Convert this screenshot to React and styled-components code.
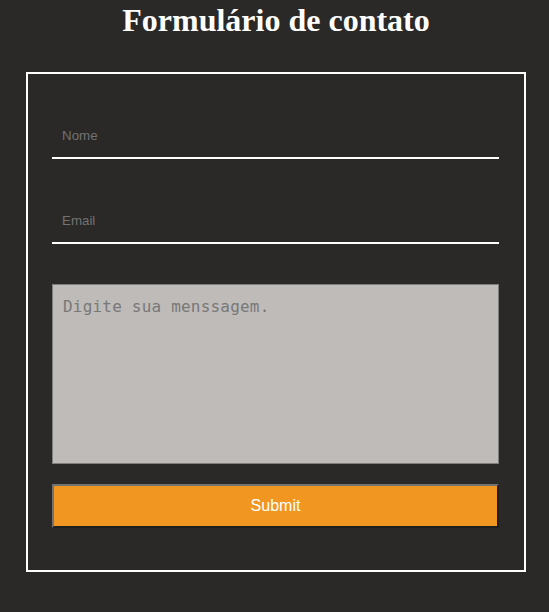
import React from 'react';
import styled, { createGlobalStyle } from 'styled-components';

const GlobalStyle = createGlobalStyle`
  html, body {
    margin: 0;
    padding: 0;
    background: #2a2928;
  }

  body {
    font-family: 'Liberation Serif', 'Times New Roman', serif;
  }
`;

const Page = styled.div`
  display: flex;
  flex-direction: column;
  width: 549px;
  min-height: 612px;
  background: #2a2928;
`;

const Title = styled.h1`
  margin: 2px 0 0 3px;
  font-family: 'Liberation Serif', 'Times New Roman', serif;
  font-size: 32px;
  font-weight: bold;
  color: #ffffff;
  text-align: center;
`;

const Card = styled.form`
  display: flex;
  flex-direction: column;
  box-sizing: border-box;
  width: 500px;
  margin: 33px 0 0 26px;
  padding: 40px 25px 42px 24px;
  border: 2px solid #ffffff;
`;

const Field = styled.input`
  box-sizing: border-box;
  width: 100%;
  height: 45px;
  padding: 0 10px;
  border: none;
  border-bottom: 2px solid #ffffff;
  background: transparent;
  color: #ffffff;
  font-family: 'Liberation Sans', Arial, sans-serif;
  font-size: 13.33px;
  outline: none;

  & + & {
    margin-top: 40px;
  }

  &::placeholder {
    color: #727272;
  }
`;

const Message = styled.textarea`
  box-sizing: border-box;
  width: 100%;
  height: 180px;
  margin-top: 40px;
  padding: 12px 10px;
  border: 1px solid #7e7e7e;
  background: #bfbbb9;
  font-family: 'DejaVu Sans Mono', 'Liberation Mono', monospace;
  font-size: 16px;
  letter-spacing: 0.2px;
  resize: none;
  outline: none;

  &::placeholder {
    color: #787878;
  }
`;

const SubmitButton = styled.button`
  box-sizing: border-box;
  width: 100%;
  height: 44px;
  margin-top: 20px;
  border-style: solid;
  border-width: 2px;
  border-color: #727272 #1f1f1f #1f1f1f #727272;
  background: #f19621;
  color: #ffffff;
  font-family: 'Liberation Sans', Arial, sans-serif;
  font-size: 16px;
  cursor: pointer;
`;

const App = () => {
  return (
    <Page>
      <GlobalStyle />
      <Title>Formulário de contato</Title>
      <Card onSubmit={(e) => e.preventDefault()}>
        <Field type="text" placeholder="Nome" />
        <Field type="email" placeholder="Email" />
        <Message placeholder="Digite sua menssagem." />
        <SubmitButton type="submit">Submit</SubmitButton>
      </Card>
    </Page>
  );
};

export default App;
